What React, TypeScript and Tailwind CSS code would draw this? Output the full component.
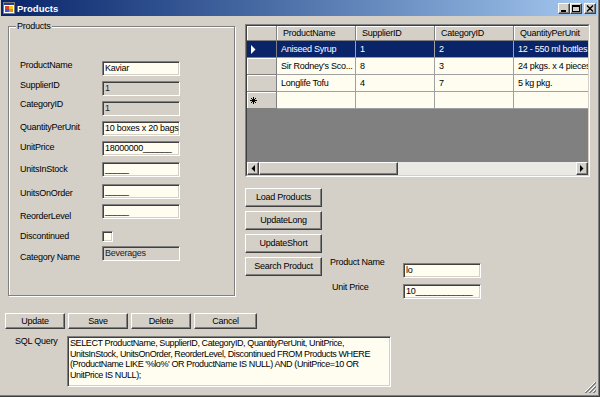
import React from 'react'

const sunken =
    'border border-t-[#808080] border-l-[#808080] border-b-white border-r-white shadow-[inset_1px_1px_0_#404040,inset_-1px_-1px_0_#d4d0c8]'
const raised =
    'border border-t-white border-l-white border-b-[#404040] border-r-[#404040] shadow-[inset_-1px_-1px_0_#808080]'

type Field = {
    label: string
    value?: string
    disabled?: boolean
    check?: boolean
    rowMt: string
    labelMt: string
}

const fields: Field[] = [
    { label: 'ProductName', value: 'Kaviar', rowMt: 'mt-[34px]', labelMt: 'mt-[-1px]' },
    { label: 'SupplierID', value: '1', disabled: true, rowMt: 'mt-[5px]', labelMt: 'mt-[-1px]' },
    { label: 'CategoryID', value: '1', disabled: true, rowMt: 'mt-[5px]', labelMt: 'mt-[-2px]' },
    { label: 'QuantityPerUnit', value: '10 boxes x 20 bags', rowMt: 'mt-[5px]', labelMt: 'mt-[1px]' },
    { label: 'UnitPrice', value: '18000000______', rowMt: 'mt-[5px]', labelMt: 'mt-[1px]' },
    { label: 'UnitsInStock', value: '_____', rowMt: 'mt-[6px]', labelMt: 'mt-[2px]' },
    { label: 'UnitsOnOrder', value: '_____', rowMt: 'mt-[7px]', labelMt: 'mt-[4px]' },
    { label: 'ReorderLevel', value: '_____', rowMt: 'mt-[5px]', labelMt: 'mt-[7px]' },
    { label: 'Discontinued', check: true, rowMt: 'mt-[12px]', labelMt: 'mt-0' },
    { label: 'Category Name', value: 'Beverages', disabled: true, rowMt: 'mt-[4px]', labelMt: 'mt-[6px]' },
]

const columns = ['ProductName', 'SupplierID', 'CategoryID', 'QuantityPerUnit']

const products = [
    { cells: ['Aniseed Syrup', '1', '2', '12 - 550 ml bottles'], selected: true },
    { cells: ["Sir Rodney's Sco...", '8', '3', '24 pkgs. x 4 pieces'], selected: false },
    { cells: ['Longlife Tofu', '4', '7', '5 kg pkg.'], selected: false },
]

const sql = [
    'SELECT ProductName, SupplierID, CategoryID, QuantityPerUnit, UnitPrice,',
    'UnitsInStock, UnitsOnOrder, ReorderLevel, Discontinued FROM Products WHERE',
    "(ProductName LIKE '%lo%' OR ProductName IS NULL) AND (UnitPrice=10 OR",
    'UnitPrice IS NULL);',
]

function TextBox({ value, disabled, className }: { value: string; disabled?: boolean; className?: string }) {
    return (
        <div
            className={`${sunken} ${disabled ? 'bg-[#d4d0c8] text-[#222]' : 'bg-[#fffcf0]'} h-[15px] flex items-center pl-[2px] whitespace-nowrap overflow-hidden ${className ?? 'w-[78px]'}`}
        >
            {value}
        </div>
    )
}

function Button({ label, className }: { label: string; className: string }) {
    return (
        <div className={`${raised} bg-[#d4d0c8] flex items-center justify-center whitespace-nowrap ${className}`}>
            {label}
        </div>
    )
}

function AppIcon() {
    return (
        <svg width="12" height="12" viewBox="0 0 12 12">
            <rect x="0.5" y="0.5" width="11" height="11" fill="#fff" stroke="#7a7a7a" />
            <rect x="1" y="1" width="10" height="2" fill="#1c3d9c" />
            <rect x="2" y="4" width="4" height="3" fill="#e2401c" />
            <rect x="6" y="4" width="4" height="3" fill="#f4c419" />
            <rect x="2" y="7" width="4" height="3" fill="#2f62d8" />
            <rect x="6" y="7" width="4" height="3" fill="#e98a1c" />
        </svg>
    )
}

function TitleButton({ kind, className }: { kind: 'min' | 'max' | 'close'; className?: string }) {
    return (
        <div className={`${raised} bg-[#d4d0c8] w-[12px] h-[11px] flex items-center justify-center ${className ?? ''}`}>
            <svg width="8" height="7" viewBox="0 0 8 7">
                {kind === 'min' && <rect x="1" y="5" width="5" height="2" fill="#000" />}
                {kind === 'max' && (
                    <>
                        <rect x="0.5" y="0.5" width="7" height="6" fill="none" stroke="#000" />
                        <rect x="0" y="0" width="8" height="2" fill="#000" />
                    </>
                )}
                {kind === 'close' && <path d="M1 0.5 L7 6.5 M7 0.5 L1 6.5" stroke="#000" strokeWidth="1.4" />}
            </svg>
        </div>
    )
}

function ScrollArrow({ dir }: { dir: 'left' | 'right' }) {
    return (
        <div className={`${raised} bg-[#d4d0c8] w-[12px] h-[13px] shrink-0 flex items-center justify-center`}>
            <svg width="4" height="7" viewBox="0 0 4 7">
                <path d={dir === 'left' ? 'M4 0 L0.5 3.5 L4 7 Z' : 'M0 0 L3.5 3.5 L0 7 Z'} fill="#000" />
            </svg>
        </div>
    )
}

function ProductGrid() {
    return (
        <div className="w-[345px] h-[153px] flex border border-t-[#808080] border-l-[#808080] border-b-white border-r-white">
            <div className="flex-1 flex flex-col overflow-hidden border border-t-[#404040] border-l-[#404040] border-b-[#d4d0c8] border-r-[#d4d0c8]">
                <div className="flex h-[15px] shrink-0">
                    <div className="w-[30px] shrink-0 bg-[#d4d0c8] border-r border-b border-[#808080] shadow-[inset_1px_1px_0_white]" />
                    {columns.map((c) => (
                        <div
                            key={c}
                            className="w-[79px] shrink-0 bg-[#d4d0c8] border-r border-b border-[#808080] shadow-[inset_1px_1px_0_white] flex items-center pl-[6px] whitespace-nowrap"
                        >
                            {c}
                        </div>
                    ))}
                </div>
                {products.map((p, i) => (
                    <div key={i} className="flex h-[17px] shrink-0">
                        <div
                            className={`w-[30px] shrink-0 border-r border-b border-[#808080] flex items-center pl-[4px] ${
                                p.selected ? 'bg-[#0a246a]' : 'bg-[#d4d0c8] shadow-[inset_1px_1px_0_white]'
                            }`}
                        >
                            {p.selected && (
                                <svg width="5" height="9" viewBox="0 0 5 9">
                                    <path d="M0 0 L4.5 4.5 L0 9 Z" fill="#fff" />
                                </svg>
                            )}
                        </div>
                        {p.cells.map((v, j) => (
                            <div
                                key={j}
                                className={`w-[79px] shrink-0 border-r border-b border-[#a0a0a0] flex items-center pl-[4px] whitespace-nowrap overflow-hidden ${
                                    p.selected ? 'bg-[#0a246a] text-white' : 'bg-[#fffcf0]'
                                }`}
                            >
                                {v}
                            </div>
                        ))}
                    </div>
                ))}
                <div className="flex h-[17px] shrink-0">
                    <div className="w-[30px] shrink-0 bg-[#d4d0c8] border-r border-b border-[#808080] shadow-[inset_1px_1px_0_white] flex items-center pl-[3px]">
                        <svg width="7" height="7" viewBox="0 0 7 7">
                            <path d="M3.5 0 V7 M0 3.5 H7 M1 1 L6 6 M6 1 L1 6" stroke="#000" strokeWidth="1" />
                        </svg>
                    </div>
                    {columns.map((c) => (
                        <div key={c} className="w-[79px] shrink-0 bg-[#fffcf0] border-r border-b border-[#a0a0a0]" />
                    ))}
                </div>
                <div className="flex-1 bg-[#808080]" />
                <div className="flex h-[13px] shrink-0 bg-[#ebe9e4]">
                    <ScrollArrow dir="left" />
                    <div className={`${raised} bg-[#d4d0c8] w-[139px] h-[13px] shrink-0`} />
                    <div className="flex-1" />
                    <ScrollArrow dir="right" />
                </div>
            </div>
        </div>
    )
}

export default function App() {
    return (
        <div className="relative w-[600px] h-[397px] bg-[#d4d0c8] flex flex-col pl-px pr-[2px] pb-[2px] border-r border-b border-[#404040] shadow-[inset_-1px_-1px_0_#808080] font-['Liberation_Sans',Arial,sans-serif] text-[9px] leading-[11px] text-black tracking-[-0.25px] overflow-hidden">
            {/* title bar */}
            <div className="h-[16px] shrink-0 flex items-center bg-linear-to-r from-[#0a246a] to-[#a6caf0] pl-[2px] pr-px">
                <AppIcon />
                <span className="ml-[2px] font-bold text-white tracking-normal text-[9.5px]">Products</span>
                <div className="ml-auto flex">
                    <TitleButton kind="min" />
                    <TitleButton kind="max" />
                    <TitleButton kind="close" className="ml-[2px]" />
                </div>
            </div>

            <div className="flex items-start">
                {/* group box */}
                <div className="relative ml-[7px] mt-[10px] w-[227px] h-[270px] border border-[#808080] shadow-[inset_1px_1px_0_white,1px_1px_0_white] flex flex-col pl-[11px]">
                    <span className="absolute left-[7px] top-[-6px] px-px bg-[#d4d0c8]">Products</span>
                    {fields.map((f) => (
                        <div key={f.label} className={`flex items-start ${f.check ? 'h-[11px]' : 'h-[15px]'} ${f.rowMt}`}>
                            <div className={`w-[82px] shrink-0 whitespace-nowrap ${f.labelMt}`}>{f.label}</div>
                            {f.check ? (
                                <div className={`${sunken} bg-[#fffcf0] w-[11px] h-[11px]`} />
                            ) : (
                                <TextBox value={f.value ?? ''} disabled={f.disabled} />
                            )}
                        </div>
                    ))}
                </div>

                {/* grid and actions */}
                <div className="ml-[10px] mt-[8px] flex flex-col">
                    <ProductGrid />
                    <div className="mt-[11px] flex">
                        <div className="flex flex-col gap-[4px]">
                            {['Load Products', 'UpdateLong', 'UpdateShort', 'Search Product'].map((b) => (
                                <Button key={b} label={b} className="w-[77px] h-[19px]" />
                            ))}
                        </div>
                        <div className="ml-[8px] mt-[68px] flex flex-col">
                            <div className="flex items-start">
                                <div className="w-[73px] mt-px whitespace-nowrap">Product Name</div>
                                <TextBox value="lo" className="w-[78px] mt-[7px]" />
                            </div>
                            <div className="flex items-start">
                                <div className="w-[73px] mt-[4px] pl-[2px] whitespace-nowrap">Unit Price</div>
                                <TextBox value="10____________" className="w-[78px] mt-[6px]" />
                            </div>
                        </div>
                    </div>
                </div>
            </div>

            {/* bottom buttons */}
            <div className="mt-[14px] ml-[4px] flex gap-[3px]">
                <Button label="Update" className="w-[60px] h-[16px]" />
                <Button label="Save" className="w-[60px] h-[16px]" />
                <Button label="Delete" className="w-[60px] h-[16px]" />
                <Button label="Cancel" className="w-[63px] h-[16px]" />
            </div>

            {/* sql query */}
            <div className="mt-[7px] flex items-start">
                <div className="w-[52px] ml-[14px] whitespace-nowrap">SQL Query</div>
                <div className={`${sunken} bg-[#fffcf0] w-[324px] h-[51px] pl-[2px] pt-px leading-[10.6px] tracking-[-0.4px] overflow-hidden`}>
                    {sql.map((line) => (
                        <div key={line} className="whitespace-nowrap">
                            {line}
                        </div>
                    ))}
                </div>
            </div>

            {/* size grip */}
            <svg className="absolute right-[3px] bottom-[3px]" width="12" height="12" viewBox="0 0 12 12">
                <path d="M11 1 L1 11 M11 5 L5 11 M11 9 L9 11" stroke="#fff" strokeWidth="1" />
                <path d="M12 1 L1 12 M12 2 L2 12 M12 5 L5 12 M12 6 L6 12 M12 9 L9 12 M12 10 L10 12" stroke="#808080" strokeWidth="1" />
            </svg>
        </div>
    )
}
